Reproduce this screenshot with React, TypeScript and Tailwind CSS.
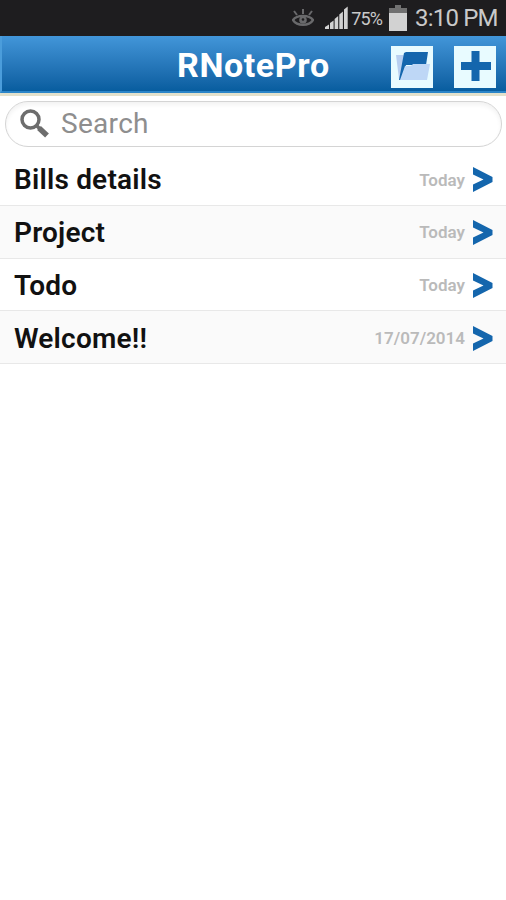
const notes = [
  { title: "Bills details", date: "Today" },
  { title: "Project", date: "Today" },
  { title: "Todo", date: "Today" },
  { title: "Welcome!!", date: "17/07/2014" },
];

function StatusBar() {
  return (
    <div className="flex h-9 items-center justify-end bg-[#1e1d1f] pr-[9px] text-[#c9c9c9]">
      <svg width="22" height="18" viewBox="0 0 22 18" fill="none" stroke="#69696b" className="mr-[11px]">
        <path d="M1 11C5 5.5 17 5.5 21 11C17 17.5 5 17.5 1 11Z" strokeWidth="2.4" />
        <circle cx="11" cy="11" r="3.8" fill="#69696b" stroke="none" />
        <circle cx="11" cy="10.5" r="1.3" fill="#1e1d1f" stroke="none" />
        <path d="M11 0V5M2 2L5 6M20 2L17 6" strokeWidth="2" />
      </svg>
      <svg width="23" height="24" viewBox="0 0 23 24" fill="#d2d2d2" className="mr-[3px]">
        <path d="M0 23V21L4 18.5V23ZM5 23V17L8.6 14.5V23ZM9.6 23V13L13.2 10V23ZM14.3 23V8.5L17.9 5.5V23ZM19 23V3.5L22.7 0.5V23Z" />
      </svg>
      <span className="mr-[7px] pt-[2px] text-[18px] leading-9 tracking-[-0.9px]">75%</span>
      <svg width="18" height="27" viewBox="0 0 18 27" className="mr-[8px]">
        <path d="M6 0H12V3H18V10H0V3H6Z" fill="#717171" />
        <path d="M0 8H18V26H0Z" fill="#d2d2d2" />
      </svg>
      <span className="w-[82px] text-[24px] leading-9 tracking-[-0.8px] whitespace-nowrap">3:10 PM</span>
    </div>
  );
}

function Header() {
  return (
    <header className="flex h-[57px] items-center border-b-2 border-l-2 border-b-[#2b85c8] border-l-[#4b9ddb] bg-linear-to-b from-[#4296d9] to-[#075d9f] pr-[10px] pl-[175px]">
      <h1 className="flex-1 pt-[2px] text-[34px] leading-10 font-bold tracking-[0.6px] text-white">RNotePro</h1>
      <div className="flex gap-[21px] pt-[6px]">
        <button className="h-[42px] w-[42px] bg-[#e8fbff]">
          <svg width="42" height="42" viewBox="0 0 42 42">
            <path d="M5 9H12L15 11L10 33H8Z" fill="#b8cff0" />
            <path d="M8 34L13 7L15 6H37L35 19H15L10 34Z" fill="#1466ad" />
            <path d="M14 20H20L22 18H39L36 34H9Z" fill="#bed7f6" />
          </svg>
        </button>
        <button className="h-[42px] w-[42px] bg-[#e8fbff]">
          <svg width="42" height="42" viewBox="0 0 42 42">
            <path d="M17.5 5H25.5V16H37V24H25.5V35H17.5V24H7V16H17.5Z" fill="#1466ad" />
          </svg>
        </button>
      </div>
    </header>
  );
}

export default function App() {
  return (
    <div className="h-[900px] w-[506px] overflow-hidden bg-white font-[Roboto,sans-serif]">
      <StatusBar />
      <Header />

      {/* Search */}
      <div className="h-[60px] border-t-[3px] border-t-[#e3e1cc] pt-[5px] pr-[4px] pl-[5px]">
        <div className="flex h-[46px] items-center rounded-full border-[1.5px] border-[#d4d4d4] pl-[14px] shadow-[inset_0_3px_4px_#f3f3f3]">
          <svg width="30" height="30" viewBox="0 0 30 30" fill="none" stroke="#6d6d6d">
            <circle cx="10.5" cy="10.5" r="8.5" strokeWidth="3.5" />
            <path d="M16.5 16.5L20 20" strokeWidth="3.5" />
            <path d="M19 19L27 26.5" strokeWidth="5.5" />
          </svg>
          <span className="ml-[11px] text-[28px] leading-10 tracking-[0.3px] text-[#8e8e8e]">Search</span>
        </div>
      </div>

      {/* Notes */}
      <ul>
        {notes.map((note) => (
          <li
            key={note.title}
            className="flex h-[52.75px] items-center border-b-[1.5px] border-[#e8e8e8] pt-[3px] pr-[13px] pl-[14px] even:bg-[#fafafa]"
          >
            <span className="flex-1 text-[28px] font-semibold tracking-[0.2px] text-[#111]">{note.title}</span>
            <span className="text-[17px] font-semibold text-[#bababa]">{note.date}</span>
            <svg width="20" height="26" viewBox="0 0 20 26" fill="#1466ad" className="ml-2">
              <path d="M0 0L19.5 10V15L0 25V17.5L10.5 12.5L0 7.5Z" />
            </svg>
          </li>
        ))}
      </ul>
    </div>
  );
}
